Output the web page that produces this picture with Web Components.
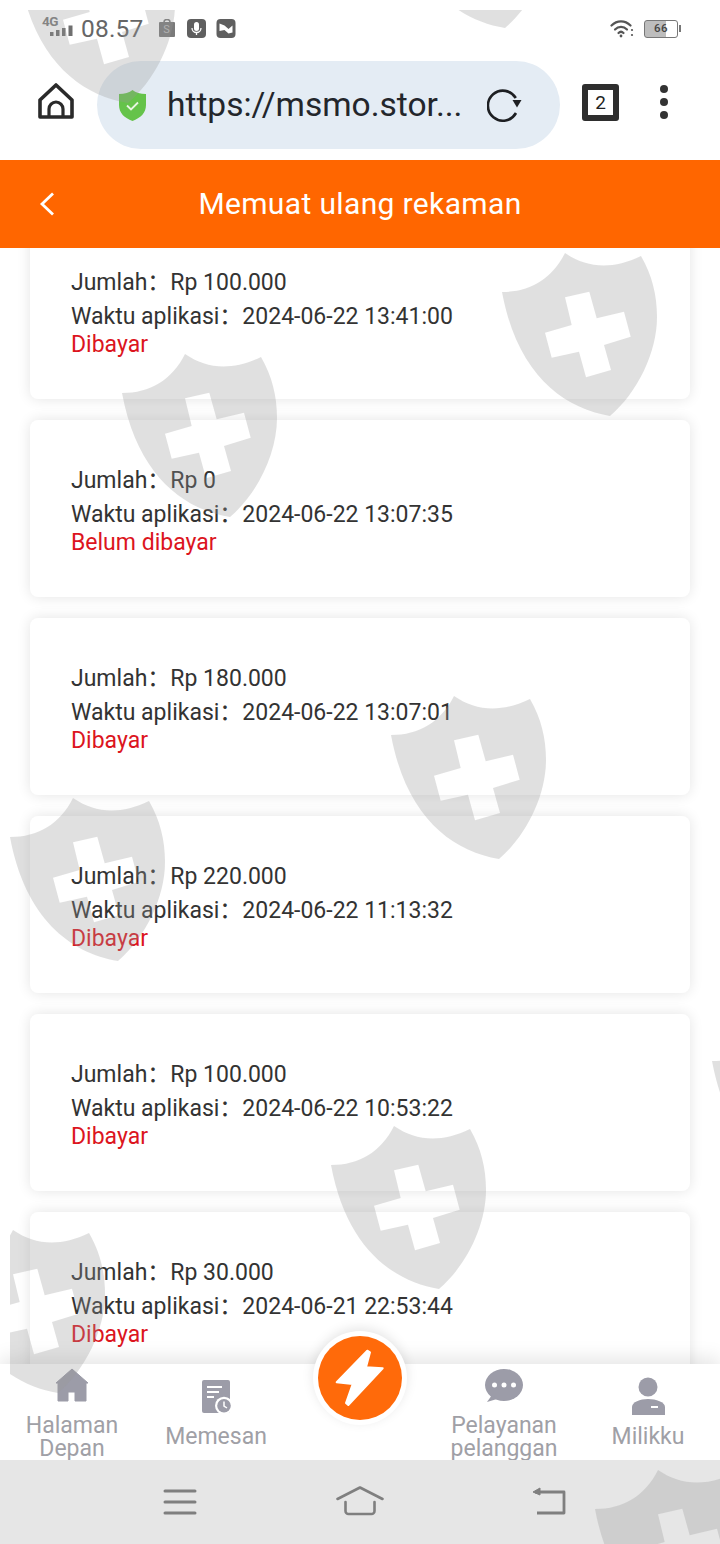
<!DOCTYPE html>
<html lang="id"><head><meta charset="utf-8"><title>Memuat ulang rekaman</title>
<style>
html,body{margin:0;padding:0;background:#fff;}
body{font-family:Roboto,"Noto Sans CJK SC",sans-serif;}
</style></head>
<body>
<app-shell>
  <status-bar slot="top"></status-bar>
  <browser-bar slot="top" url="https://msmo.stor..." tabs="2"></browser-bar>
  <app-header slot="top" title="Memuat ulang rekaman"></app-header>
  <record-list slot="main">
    <record-card amount="Rp 100.000" time="2024-06-22 13:41:00" state="Dibayar"></record-card>
    <record-card amount="Rp 0" time="2024-06-22 13:07:35" state="Belum dibayar"></record-card>
    <record-card amount="Rp 180.000" time="2024-06-22 13:07:01" state="Dibayar"></record-card>
    <record-card amount="Rp 220.000" time="2024-06-22 11:13:32" state="Dibayar"></record-card>
    <record-card amount="Rp 100.000" time="2024-06-22 10:53:22" state="Dibayar"></record-card>
    <record-card amount="Rp 30.000" time="2024-06-21 22:53:44" state="Dibayar"></record-card>
  </record-list>
  <bottom-nav slot="bottom"></bottom-nav>
  <system-nav slot="bottom"></system-nav>
  <watermark-layer slot="over"></watermark-layer>
</app-shell>
<script>
function def(name, css, html, init){
  customElements.define(name, class extends HTMLElement{
    connectedCallback(){
      if(this.shadowRoot) return;
      const r=this.attachShadow({mode:'open'});
      const a=k=>this.getAttribute(k)||'';
      r.innerHTML='<style>'+css+'</style>'+(typeof html==='function'?html(a):html);
      if(init) init(r,this);
    }
  });
}

def('app-shell',`
  :host{display:flex;flex-direction:column;position:relative;width:720px;height:1544px;overflow:hidden;background:#fff;color:#333;font-family:Roboto,"Noto Sans CJK SC",sans-serif}
  .main{flex:1;min-height:0;overflow:hidden}
  .bottom{position:relative;z-index:2}
`,`<slot name="top"></slot><div class="main"><slot name="main"></slot></div><div class="bottom"><slot name="bottom"></slot></div><slot name="over"></slot>`);

def('status-bar',`
  :host{display:flex;align-items:center;height:56px;box-sizing:border-box;padding:0 42px 0 42px;color:#6a6a6a}
  .net{display:flex;flex-direction:column;width:31px;height:20px;margin-top:-1px;position:relative}
  .net b{font:700 13.5px/12px Roboto,sans-serif;letter-spacing:-.5px;position:absolute;left:0;top:-3px;color:#7c7c7c}
  .net svg{position:absolute;left:8px;top:7px}
  .time{font:400 24.5px/28px Roboto,sans-serif;margin-left:8px;margin-top:1px;letter-spacing:.2px;color:#666}
  .icons{display:flex;align-items:center;gap:11px;margin-left:15px}
  .sq{width:19px;height:19px;display:block}
  .spacer{flex:1}
  .bag{position:relative;width:16px;height:18px;display:block}
  .bag i{position:absolute;inset:3px 0 0;background:#7a7a7a;border-radius:1px;font:400 11px/15px Roboto,sans-serif;color:#bbb;text-align:center}
  .bag svg{position:absolute;left:3px;top:0}
  .bat{width:34px;height:18px;box-sizing:border-box;border:1.5px solid #777;border-radius:3px;position:relative;margin-left:10px;margin-top:2px;font:500 11.5px/15px Roboto,sans-serif;color:#444;text-align:center;letter-spacing:.4px;background:linear-gradient(90deg,#bdbdbd 66%,#fff 66%)}
  .bat:after{content:"";position:absolute;right:-4px;top:4px;width:2px;height:7px;background:#777}
`,`<div class="net"><b>4G</b><svg width="24" height="11" viewBox="0 0 24 11" fill="#6f6f6f"><rect x="0" y="7" width="3.5" height="4"/><rect x="6" y="5" width="3.5" height="6"/><rect x="12" y="3" width="3.5" height="8"/><rect x="18.500" y="0.500" width="4" height="10.500"/></svg></div>
<span class="time">08.57</span>
<div class="icons">
  <span class="bag"><svg width="10" height="6" viewBox="0 0 10 6" fill="none" stroke="#7a7a7a" stroke-width="1.500"><path d="M2 5V3a3 2.500 0 0 1 6 0v2"/></svg><i>S</i></span>
  <svg class="sq" viewBox="0 0 19 19" style="margin-left:1px"><rect width="19" height="19" rx="4" fill="#5f5f5f"/><rect x="7" y="3" width="5" height="9" rx="2.500" fill="#fff"/><path d="M5 9a4.500 4.500 0 0 0 9 0M9.500 13.500V16" fill="none" stroke="#fff" stroke-width="1.300"/></svg>
  <svg class="sq" viewBox="0 0 19 19" style="width:20px;margin-left:-1px"><rect width="19" height="19" rx="4" fill="#5f5f5f"/><path d="M3 4.500l5 2 4 3.500 4-3.500v7l-4 1-4-3.500-5 1z" fill="#fff"/></svg>
</div>
<span class="spacer"></span>
<svg width="24" height="19" viewBox="0 0 24 19" fill="none" stroke="#555" stroke-linecap="round"><path d="M1.500 6.500C7 1 15 1 20.500 6.500" stroke-width="2.200"/><path d="M5 10.500c3.500-3.500 8.500-3.500 12 0" stroke-width="2.200"/><path d="M8.500 14c1.500-1.500 3.500-1.500 5 0" stroke-width="2.200"/><circle cx="11" cy="17" r="1.400" fill="#555" stroke="none"/><circle cx="22" cy="11" r="1.100" fill="#555" stroke="none"/><circle cx="22" cy="16" r="1.100" fill="#555" stroke="none"/></svg>
<span class="bat">66</span>`);

def('browser-bar',`
  :host{display:flex;align-items:center;height:104px;box-sizing:border-box;padding:0 0 6px 38px;position:relative}
  .home{width:36px;height:36px;display:block;flex:none;margin-top:-8px}
  .pill{display:flex;align-items:center;width:463px;height:88px;box-sizing:border-box;margin-left:23px;border-radius:44px;background:#e4ecf4;padding-left:22px;flex:none}
  .url{font:400 33.500px/40px Roboto,sans-serif;color:#23262b;margin-left:21px;width:306px;white-space:nowrap}
  .tab{box-sizing:border-box;width:37px;height:37px;border:6px solid #2e2e2e;border-radius:3px;margin-left:22px;font:400 19px/25px Roboto,sans-serif;text-align:center;color:#222;flex:none;margin-top:-5px}
  .dots{display:flex;flex-direction:column;gap:5px;margin-left:41px;margin-top:-6px}
  .dots i{display:block;width:8px;height:8px;border-radius:50%;background:#333}
`,a=>`<svg class="home" viewBox="0 0 36 36" fill="none" stroke="#2a2a2a" stroke-width="3.600" stroke-linejoin="round"><path d="M2 17L18 2l16 15v17H2z"/><path d="M11 33v-7a7 7 0 0 1 14 0v7" stroke-width="3.200"/></svg>
<div class="pill">
  <svg width="27" height="31" viewBox="0 0 27 31"><path d="M13.500 0c3 2.500 8 4 13.500 4v11c0 8-5.500 13-13.500 16C5.500 28 0 23 0 15V4c5.500 0 10.500-1.500 13.500-4z" fill="#65c34a"/><path d="M8 15.500l4 4 7-7" fill="none" stroke="#e8f5e2" stroke-width="1.800"/></svg>
  <span class="url">${a('url')}</span>
  <svg width="36" height="34" viewBox="0 0 36 34" fill="none" style="margin-left:14px;flex:none"><path d="M28.800 10A15 15 0 1 0 29 25" stroke="#1d1f22" stroke-width="2.600"/><path d="M25.500 12h9L30 19.500z" fill="#1d1f22"/></svg>
</div>
<div class="tab">${a('tabs')}</div>
<div class="dots"><i></i><i></i><i></i></div>`);

def('app-header',`
  :host{display:flex;align-items:center;justify-content:center;position:relative;height:88px;background:#ff6600;color:#fff;z-index:1}
  h1{margin:0;font:400 30px/36px Roboto,sans-serif;letter-spacing:.36px}
  svg{position:absolute;left:39px;top:32px}
`,a=>`<svg width="16" height="24" viewBox="0 0 16 24" fill="none" stroke="#fff" stroke-width="2.800"><path d="M14 1.500L3 12l11 10.500"/></svg><h1>${a('title')}</h1>`);

def('record-list',`
  :host{display:flex;flex-direction:column;gap:21px;padding:0 30px;margin-top:-26px}
`,`<slot></slot>`);

def('record-card',`
  :host{display:flex;flex-direction:column;flex:none;box-sizing:border-box;height:177px;padding:44px 0 0 41px;background:#fff;border-radius:8px;box-shadow:0 0 14px rgba(0,0,0,.11);font:400 23px/34px Roboto,"Noto Sans CJK SC",sans-serif;color:#333}
  .s{color:#dc1420;line-height:22px;margin-top:0}
`,a=>`<div>Jumlah：Rp ${a('amount').replace('Rp ','')}</div><div>Waktu aplikasi：${a('time')}</div><div class="s">${a('state')}</div>`);

const c='#9c9ca8';
def('bottom-nav',`
  :host{display:grid;grid-template-columns:repeat(5,1fr);height:96px;background:#fff;position:relative;box-shadow:0 -6px 18px rgba(0,0,0,.1)}
  .fab{position:relative;display:block}
  .ring{position:absolute;left:25px;top:-33px;width:94px;height:94px;border-radius:50%;background:#fff;box-shadow:0 -3px 12px rgba(0,0,0,.1);display:flex;align-items:center;justify-content:center}
  .disc{width:84px;height:84px;border-radius:50%;background:#ff6a0a;display:block}
`,`<nav-item label="Halaman Depan"><svg viewBox="0 0 40 36" width="40" height="36"><path d="M20 2L36 16h-2v18H23v-9h-7v9H6V16H4z" fill="${c}" stroke="${c}" stroke-linejoin="round"/></svg></nav-item>
<nav-item label="Memesan"><svg viewBox="0 0 40 36" width="40" height="36"><rect x="6" y="2" width="28" height="33" rx="2" fill="${c}"/><path d="M11 9h15M11 14h12M11 19h7" stroke="#fff" stroke-width="2"/><circle cx="28" cy="27.700" r="9" fill="#fff"/><circle cx="28" cy="27.700" r="6.800" fill="${c}"/><path d="M28 23.500v4.500l3 2" stroke="#fff" stroke-width="1.500" fill="none"/></svg></nav-item>
<div class="fab"><span class="ring"><svg class="disc" viewBox="0 0 84 84"><path d="M49.300 14.700L52 16.300 48 31.300 64.700 32.300 30.300 69 28 67 34.700 48 18.700 46.300z" fill="#fff" stroke="#fff" stroke-width="2" stroke-linejoin="round"/></svg></span></div>
<nav-item label="Pelayanan pelanggan"><svg viewBox="0 0 40 36" width="40" height="36"><ellipse cx="20" cy="18" rx="19" ry="16" fill="${c}"/><path d="M8 28L3 35l10-3z" fill="${c}"/><circle cx="10.500" cy="18" r="2.500" fill="#fff"/><circle cx="20" cy="18" r="2.500" fill="#fff"/><circle cx="29.500" cy="18" r="2.500" fill="#fff"/></svg></nav-item>
<nav-item label="Milikku"><svg viewBox="0 0 40 36" width="40" height="36" style="overflow:visible"><circle cx="20" cy="9" r="9.500" fill="${c}"/><path d="M4 37V29c0-5 8-8 16-8s17 3 17 8v8z" fill="${c}"/><rect x="23" y="28" width="7" height="2" fill="#fff"/></svg></nav-item>`);

def('nav-item',`
  :host{display:flex;flex-direction:column;align-items:center;justify-content:center;gap:11px;height:96px;padding-top:2px;box-sizing:border-box;overflow:visible;font:400 23px/23px Roboto,sans-serif;color:#a0a0a6;text-align:center}
  .t{width:110px}
  ::slotted(svg){display:block}
`,a=>`<slot></slot><div class="t">${a('label')}</div>`);

def('system-nav',`
  :host{display:flex;height:84px;background:#e6e6e6;align-items:center;justify-content:center;gap:0;position:relative}
  div{display:grid;grid-template-columns:repeat(3,180px);justify-items:center;align-items:center;margin-top:-2px}
`,`<div>
<svg width="34" height="26" viewBox="0 0 34 26" stroke="#7f7f7f" stroke-width="3" stroke-linecap="round" style="margin-top:1px"><path d="M2 2h30M2 13h30M2 24h30"/></svg>
<svg width="48" height="30" viewBox="0 0 48 30" fill="none" stroke="#7f7f7f" stroke-width="2.600" stroke-linecap="round" stroke-linejoin="round"><path d="M1.500 13L24 1.500 46.500 13"/><path d="M9.500 16v9a3 3 0 0 0 3 3h23a3 3 0 0 0 3-3v-9"/></svg>
<svg width="36" height="28" viewBox="0 0 36 28" fill="none" stroke="#7f7f7f" stroke-width="2.800" stroke-linejoin="round" style="margin-left:18px"><path d="M4 5h29v21H6"/><path d="M9 1L2 5l7 3z" fill="#7f7f7f" stroke-width="1"/></svg>
</div>`);

const shield='M0 39C28 39 50 26 63 0 85 15 110 17 139 3 150 22 155 42 155 64 155 100 135 140 108 163 60 155 15 120 0 39Z'+
 'M63 44.300L87.300 38.700 94.700 65.300 122 58.700 128.700 83.700 102 92 109 117 84 124.300 77 98.700 49.700 104.700 43 79.700 69.700 72Z';
const spots=[[20,-60],[397,-135],[502,253],[122,354],[391,696],[10,798],[331,1126],[-50,1230],[712,1022],[595,1470]];
def('watermark-layer',`
  :host{position:absolute;inset:0;pointer-events:none;z-index:5}
  .clip{position:absolute;left:10px;top:10px;right:0;bottom:0;overflow:hidden}
  svg{position:absolute;width:155px;height:163px;overflow:visible}
`,()=>`<div class="clip">`+spots.map(([x,y])=>`<svg viewBox="0 0 155 163" style="left:${x-10}px;top:${y-10}px"><path d="${shield}" fill="rgb(152,152,152)" fill-opacity=".3" fill-rule="evenodd"/></svg>`).join('')+`</div>`);
</script>
</body></html>
